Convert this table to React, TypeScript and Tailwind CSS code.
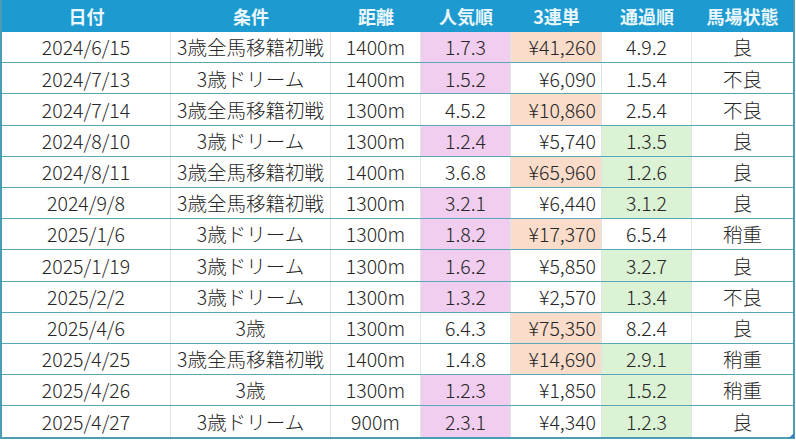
const headers = ['日付', '条件', '距離', '人気順', '3連単', '通過順', '馬場状態'];

const widths = ['w-[169px]', 'w-[160px]', 'w-[90px]', 'w-[90px]', 'w-[91px]', 'w-[90px]', 'flex-1'];

type Race = {
    date: string;
    cond: string;
    dist: string;
    pop: string;
    popHit: boolean;
    tri: string;
    triHit: boolean;
    pass: string;
    passHit: boolean;
    track: string;
};

const races: Race[] = [
    { date: '2024/6/15', cond: '3歳全馬移籍初戦', dist: '1400m', pop: '1.7.3', popHit: true, tri: '¥41,260', triHit: true, pass: '4.9.2', passHit: false, track: '良' },
    { date: '2024/7/13', cond: '3歳ドリーム', dist: '1400m', pop: '1.5.2', popHit: true, tri: '¥6,090', triHit: false, pass: '1.5.4', passHit: false, track: '不良' },
    { date: '2024/7/14', cond: '3歳全馬移籍初戦', dist: '1300m', pop: '4.5.2', popHit: false, tri: '¥10,860', triHit: true, pass: '2.5.4', passHit: false, track: '不良' },
    { date: '2024/8/10', cond: '3歳ドリーム', dist: '1300m', pop: '1.2.4', popHit: true, tri: '¥5,740', triHit: false, pass: '1.3.5', passHit: true, track: '良' },
    { date: '2024/8/11', cond: '3歳全馬移籍初戦', dist: '1400m', pop: '3.6.8', popHit: false, tri: '¥65,960', triHit: true, pass: '1.2.6', passHit: true, track: '良' },
    { date: '2024/9/8', cond: '3歳全馬移籍初戦', dist: '1300m', pop: '3.2.1', popHit: true, tri: '¥6,440', triHit: false, pass: '3.1.2', passHit: true, track: '良' },
    { date: '2025/1/6', cond: '3歳ドリーム', dist: '1300m', pop: '1.8.2', popHit: true, tri: '¥17,370', triHit: true, pass: '6.5.4', passHit: false, track: '稍重' },
    { date: '2025/1/19', cond: '3歳ドリーム', dist: '1300m', pop: '1.6.2', popHit: true, tri: '¥5,850', triHit: false, pass: '3.2.7', passHit: true, track: '良' },
    { date: '2025/2/2', cond: '3歳ドリーム', dist: '1300m', pop: '1.3.2', popHit: true, tri: '¥2,570', triHit: false, pass: '1.3.4', passHit: true, track: '不良' },
    { date: '2025/4/6', cond: '3歳', dist: '1300m', pop: '6.4.3', popHit: false, tri: '¥75,350', triHit: true, pass: '8.2.4', passHit: false, track: '良' },
    { date: '2025/4/25', cond: '3歳全馬移籍初戦', dist: '1400m', pop: '1.4.8', popHit: false, tri: '¥14,690', triHit: true, pass: '2.9.1', passHit: true, track: '稍重' },
    { date: '2025/4/26', cond: '3歳', dist: '1300m', pop: '1.2.3', popHit: true, tri: '¥1,850', triHit: false, pass: '1.5.2', passHit: true, track: '稍重' },
    { date: '2025/4/27', cond: '3歳ドリーム', dist: '900m', pop: '2.3.1', popHit: true, tri: '¥4,340', triHit: false, pass: '1.2.3', passHit: true, track: '良' },
];

function Cell({ w, bg = 'bg-white', align = 'justify-center', last = false, children }: { w: string; bg?: string; align?: string; last?: boolean; children: React.ReactNode }) {
    return (
        <div className={`${w} ${bg} ${align} flex items-center h-full ${last ? '' : 'border-r border-[#dde6ea]'}`}>
            {children}
        </div>
    );
}

export default function App() {
    return (
        <div
            className="w-[796px] h-[443px] bg-white overflow-hidden text-[#262626]"
            style={{ fontFamily: '"Noto Sans CJK JP", "Noto Sans", sans-serif' }}
        >
            <div className="relative w-[795px] border-x-2 border-b-2 border-[#4a9db2]">
                <div className="flex h-[32px] bg-[#1d9ad0] text-[#eaf7fd] text-[18px] font-bold">
                    {headers.map((h, i) => (
                        <div key={h} className={`${widths[i]} flex items-center justify-center`}>{h}</div>
                    ))}
                </div>
                {races.map((r, i) => (
                    <div
                        key={r.date}
                        className={`flex h-[31.2px] text-[19.5px] font-light leading-none ${i < races.length - 1 ? 'border-b border-[#5aa7b9]' : ''}`}
                    >
                        <Cell w={widths[0]}>{r.date}</Cell>
                        <Cell w={widths[1]}>{r.cond}</Cell>
                        <Cell w={widths[2]}>{r.dist}</Cell>
                        <Cell w={widths[3]} bg={r.popHit ? 'bg-[#f1cdef]' : 'bg-white'}>{r.pop}</Cell>
                        <Cell w={widths[4]} bg={r.triHit ? 'bg-[#fadcca]' : 'bg-white'} align="justify-end pr-[5px]">{r.tri}</Cell>
                        <Cell w={widths[5]} bg={r.passHit ? 'bg-[#dcf2d5]' : 'bg-white'}>{r.pass}</Cell>
                        <Cell w={widths[6]} last>{r.track}</Cell>
                    </div>
                ))}
                <div className="absolute right-[-1px] bottom-[-1px] w-0 h-0 border-l-[5px] border-l-transparent border-b-[5px] border-b-[#3a7fc4]" />
            </div>
        </div>
    );
}
